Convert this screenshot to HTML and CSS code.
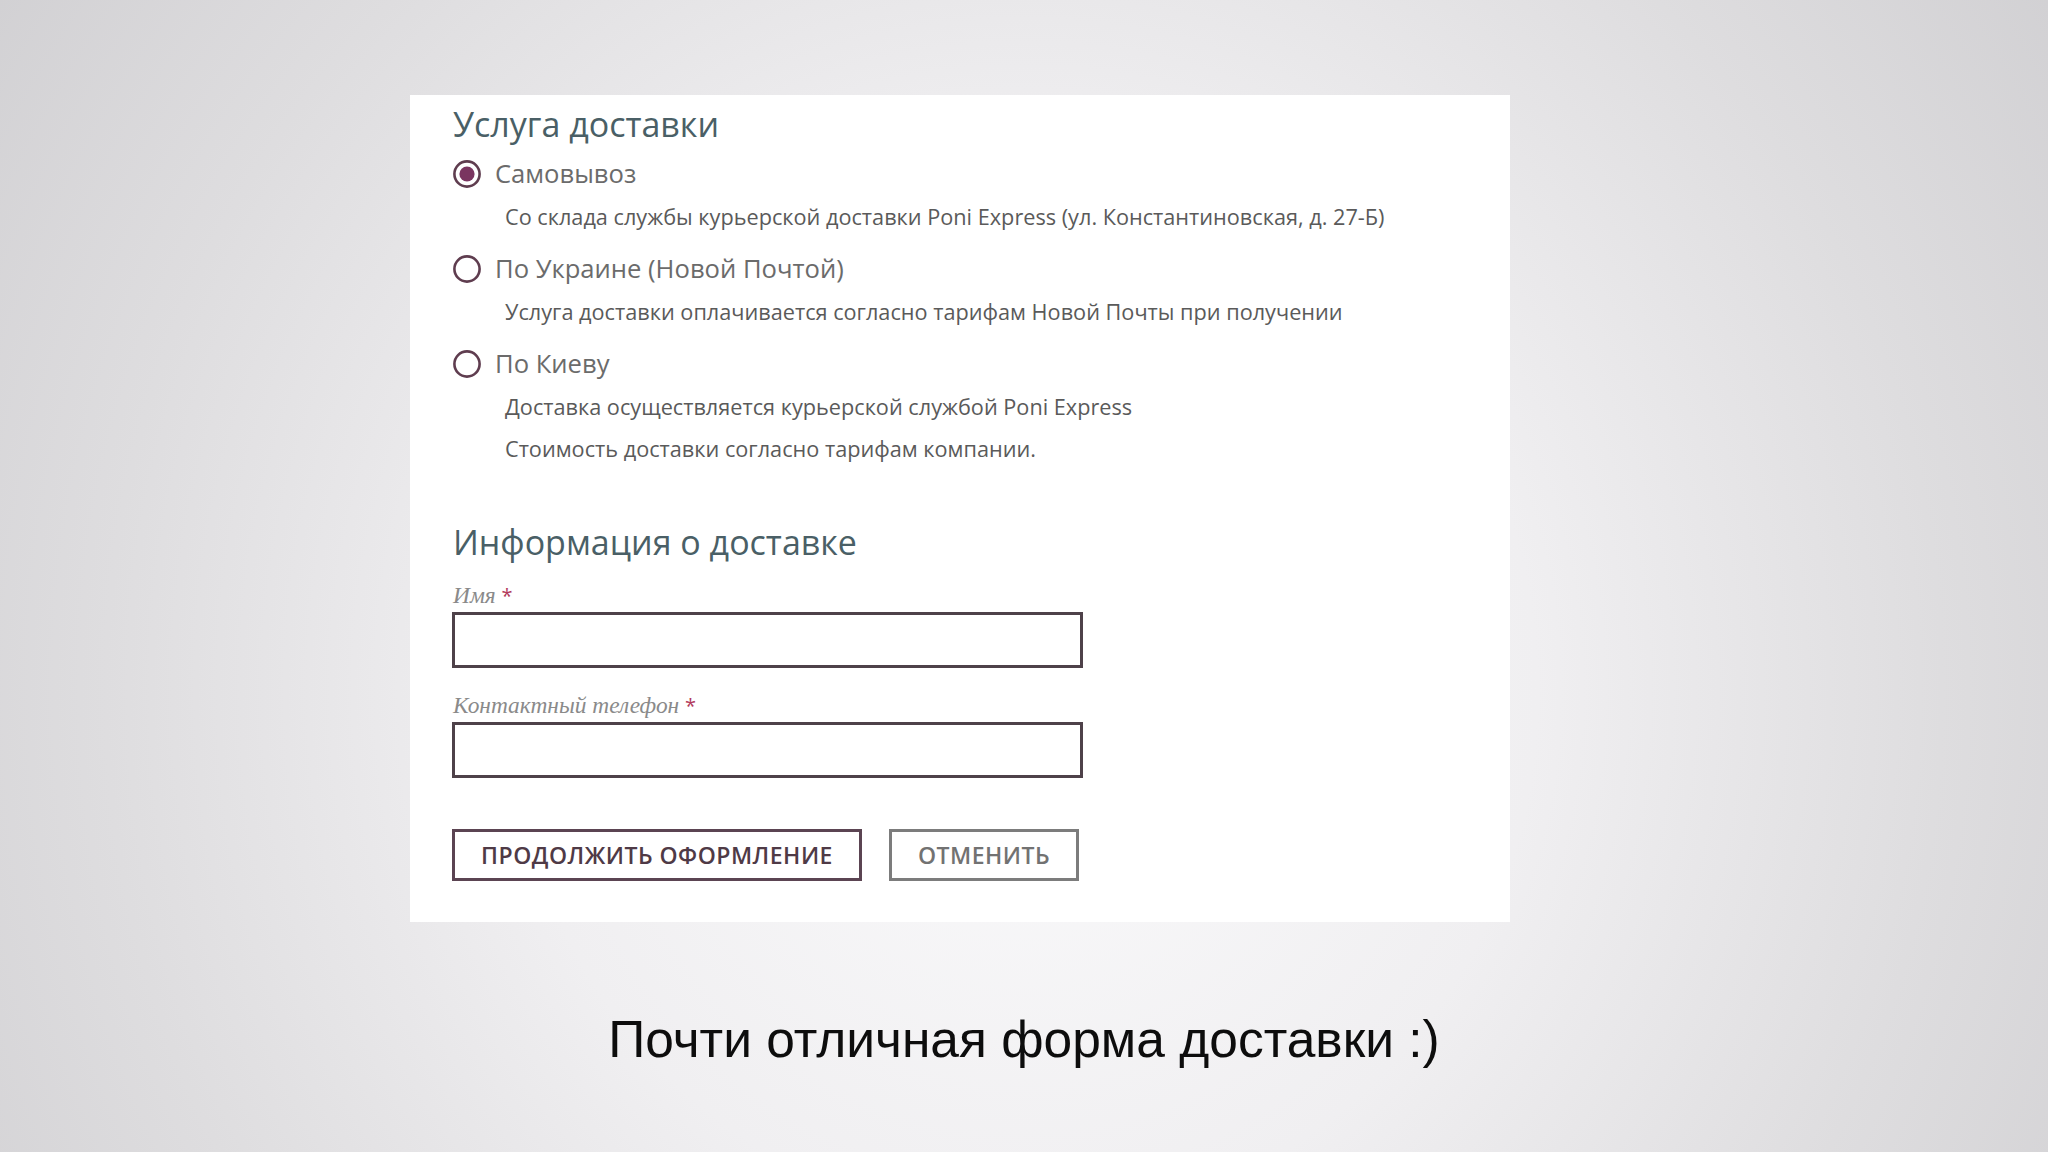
FILE: index.html
```html
<!DOCTYPE html>
<html lang="ru">
<head>
<meta charset="utf-8">
<title>Форма доставки</title>
<link rel="stylesheet" href="styles.css">
</head>
<body>
<div class="stage">
  <div class="card">
    <h2 class="title">Услуга доставки</h2>
    <div class="options">
      <div class="option">
        <div class="opt-head">
          <svg class="radio" viewBox="0 0 30 30" width="30" height="30"><circle cx="15" cy="15" r="12.6" fill="#fff" stroke="#5f3d4f" stroke-width="2.6"/><circle cx="15" cy="15" r="7.6" fill="#7a3560"/></svg>
          <span class="opt-label">Самовывоз</span>
        </div>
        <div class="opt-desc">
          <p>Со склада службы курьерской доставки Poni Express (ул. Константиновская, д. 27-Б)</p>
        </div>
      </div>
      <div class="option">
        <div class="opt-head">
          <svg class="radio" viewBox="0 0 30 30" width="30" height="30"><circle cx="15" cy="15" r="12.6" fill="#fff" stroke="#5f3d4f" stroke-width="2.6"/></svg>
          <span class="opt-label">По Украине (Новой Почтой)</span>
        </div>
        <div class="opt-desc">
          <p>Услуга доставки оплачивается согласно тарифам Новой Почты при получении</p>
        </div>
      </div>
      <div class="option">
        <div class="opt-head">
          <svg class="radio" viewBox="0 0 30 30" width="30" height="30"><circle cx="15" cy="15" r="12.6" fill="#fff" stroke="#5f3d4f" stroke-width="2.6"/></svg>
          <span class="opt-label">По Киеву</span>
        </div>
        <div class="opt-desc">
          <p>Доставка осуществляется курьерской службой Poni Express</p>
          <p>Стоимость доставки согласно тарифам компании.</p>
        </div>
      </div>
    </div>

    <h2 class="title title-info">Информация о доставке</h2>
    <div class="field">
      <label class="field-label">Имя <span class="req">*</span></label>
      <div class="input"></div>
    </div>
    <div class="field field-2">
      <label class="field-label">Контактный телефон <span class="req">*</span></label>
      <div class="input"></div>
    </div>

    <div class="actions">
      <button class="btn btn-primary">Продолжить оформление</button>
      <button class="btn btn-secondary">Отменить</button>
    </div>
  </div>
  <div class="caption">Почти отличная форма доставки :)</div>
</div>
</body>
</html>
```

FILE: styles.css
```css
html, body {
  margin: 0;
  padding: 0;
}
body {
  width: 2048px;
  height: 1152px;
  overflow: hidden;
  background: radial-gradient(ellipse 1350px 1400px at 50% 60%, #fbfbfc 0%, #f0eff1 38%, #dedddf 68%, #cdcccf 100%);
  font-family: "Open Sans", "Noto Sans", sans-serif;
}
.stage {
  display: flex;
  flex-direction: column;
  padding-top: 95px;
}
.card {
  margin-left: 410px;
  width: 1100px;
  box-sizing: border-box;
  background: #fff;
  padding: 6px 43px 41px 43px;
}
.title {
  margin: 0;
  font-size: 34px;
  line-height: 46px;
  font-weight: 400;
  color: #4a5f66;
}
.options {
  margin-top: 9px;
}
.option + .option {
  margin-top: 19px;
}
.opt-head {
  display: flex;
  align-items: center;
  height: 36px;
}
.radio {
  display: block;
  width: 30px;
  height: 30px;
  margin-left: -1px;
  flex: none;
}
.opt-label {
  margin-left: 13px;
  font-size: 25.6px;
  color: #6b6b6b;
  line-height: 36px;
}
.opt-desc {
  margin-top: 10px;
  padding-left: 52px;
}
.opt-desc p {
  margin: 0;
  font-size: 21.7px;
  line-height: 30px;
  color: #5a5a5a;
}
.opt-desc p + p {
  margin-top: 12px;
}
.title-info {
  margin-top: 55px;
}
.field {
  margin-top: 15px;
}
.field-2 {
  margin-top: 22px;
}
.field-label {
  display: block;
  font-family: "Liberation Serif", "DejaVu Serif", serif;
  font-style: italic;
  font-size: 23.4px;
  line-height: 31px;
  color: #8a8a8a;
  margin-bottom: 1px;
}
.req {
  color: #b23a5c;
  font-style: normal;
  font-family: "Open Sans", sans-serif;
  font-size: 20px;
}
.input {
  width: 631px;
  height: 56px;
  box-sizing: border-box;
  border: 3px solid #4e4149;
  margin-left: -1px;
  background: #fff;
}
.actions {
  display: flex;
  gap: 27px;
  margin-top: 51px;
  margin-left: -1px;
}
.btn {
  height: 52px;
  box-sizing: border-box;
  background: #fff;
  font-family: "Open Sans", sans-serif;
  font-weight: 600;
  font-size: 23px;
  letter-spacing: 0.5px;
  text-transform: uppercase;
  padding: 0;
  display: flex;
  align-items: center;
  justify-content: center;
}
.btn-primary {
  width: 410px;
  border: 3px solid #5b4452;
  color: #4f3a46;
}
.btn-secondary {
  width: 190px;
  border: 3px solid #7c7c7c;
  color: #727272;
}
.caption {
  margin-top: 87px;
  text-align: center;
  font-family: "Liberation Sans", Arial, sans-serif;
  font-size: 51.5px;
  line-height: 60px;
  color: #0d0d0d;
}
```
